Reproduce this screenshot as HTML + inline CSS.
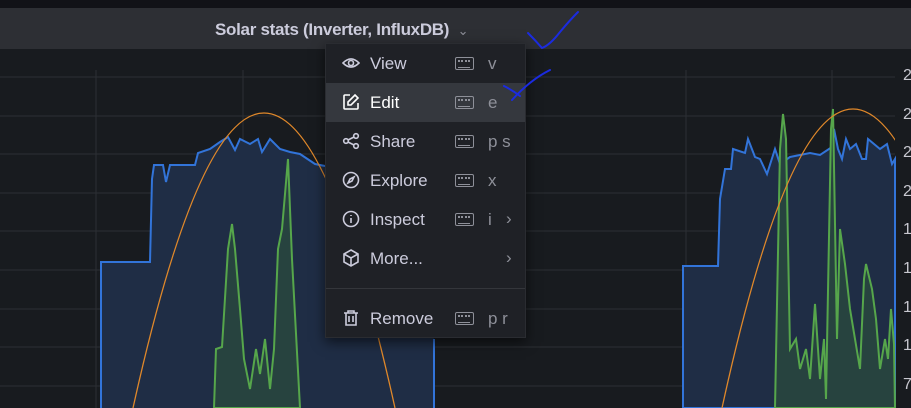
<!DOCTYPE html>
<html><head><style>
*{margin:0;padding:0;box-sizing:border-box}
body{width:911px;height:408px;overflow:hidden;background:#181b1f;font-family:"Liberation Sans",sans-serif;position:relative}
.top{position:absolute;left:0;top:0;width:911px;height:8px;background:#111217}
.hdr{position:absolute;left:0;top:8px;width:911px;height:41px;background:#2d2f34}
.title{position:absolute;left:215px;top:20px;font-size:17px;color:#ccccdc;font-weight:bold;letter-spacing:-0.3px}
.menu{position:absolute;left:325px;top:43px;width:201px;height:295px;background:#1f2126;border:1px solid #2a2c31;box-shadow:0 4px 12px rgba(0,0,0,.6)}
.it{position:absolute;left:0;width:199px;height:39px;color:#ccccdc;font-size:17px}
.it.hl{background:#35383e;color:#fff}
.it .lb{position:absolute;left:44px;top:10px}
.it .ic{position:absolute;left:16px;top:10px;width:18px;height:18px}
.it .kb{position:absolute;left:129px;top:13px;width:19px;height:13px;border:1.5px solid #8e9099;border-radius:2px}
.it .kb:after{content:"";position:absolute;left:2px;top:2px;width:12px;height:5px;border-top:2px dotted #8e9099;border-bottom:1.5px solid #8e9099}
.it .k{position:absolute;left:162px;top:10px;color:#8e9099}
.it .ch{position:absolute;left:180px;top:9px;color:#8e9099}
.div{position:absolute;left:0;top:244px;width:199px;height:1px;background:#34363b}
.ax{position:absolute;left:903px;color:#c8c8d0;font-size:16px}
</style></head><body>
<div class="top"></div>
<div class="hdr"></div>
<svg style="position:absolute;left:0;top:49px" width="911" height="359">
<defs><clipPath id="c"><rect x="0" y="0" width="895" height="359"/></clipPath></defs>
<g stroke="#2c2f34" stroke-width="1">
<line x1="0" y1="28" x2="895" y2="28"/><line x1="0" y1="67" x2="895" y2="67"/><line x1="0" y1="105" x2="895" y2="105"/><line x1="0" y1="144" x2="895" y2="144"/><line x1="0" y1="182" x2="895" y2="182"/><line x1="0" y1="221" x2="895" y2="221"/><line x1="0" y1="260" x2="895" y2="260"/><line x1="0" y1="298" x2="895" y2="298"/><line x1="0" y1="337" x2="895" y2="337"/>
<line x1="96" y1="21" x2="96" y2="359"/><line x1="243" y1="21" x2="243" y2="359"/><line x1="686" y1="21" x2="686" y2="359"/><line x1="832" y1="21" x2="832" y2="359"/>
</g>
<path d="M101 359 L101 213 L150 213 L152 130 L154 116 L163 116 L166 133 L170 116 L195 116 L198 104 L210 100 L220 93 L228 88 L235 101 L240 90 L250 95 L258 90 L262 103 L270 90 L280 100 L290 103 L300 105 L315 115 L330 118 L434 118 L434 359 Z" fill="#1f2d45"/>
<path d="M101 359 L101 213 L150 213 L152 130 L154 116 L163 116 L166 133 L170 116 L195 116 L198 104 L210 100 L220 93 L228 88 L235 101 L240 90 L250 95 L258 90 L262 103 L270 90 L280 100 L290 103 L300 105 L315 115 L330 118" fill="none" stroke="#3274d9" stroke-width="2"/>
<line x1="434" y1="290" x2="434" y2="359" stroke="#3274d9" stroke-width="2"/>
<path d="M214 359 L216 300 L222 298 L228 200 L232 175 L235 200 L240 260 L244 310 L250 340 L256 300 L260 325 L265 290 L270 340 L274 300 L278 200 L282 180 L288 110 L292 210 L300 359 Z" fill="#27433f" stroke="#56a64b" stroke-width="2"/>
<path d="M133 359 Q264 -231 395 359" fill="none" stroke="#e0882a" stroke-width="1.3"/>
<path d="M683 359 L683 217 L718 217 L720 150 L725 120 L731 120 L733 100 L745 104 L748 90 L755 108 L760 110 L767 125 L775 100 L780 115 L790 108 L810 104 L820 106 L832 98 L834 80 L838 100 L842 110 L846 90 L850 100 L856 95 L862 110 L866 110 L868 90 L880 100 L887 95 L892 115 L895 110 L895 359 Z" fill="#1f2d45" stroke="#3274d9" stroke-width="2"/>
<path d="M775 359 L780 100 L783 65 L786 90 L790 300 L796 290 L800 320 L806 300 L810 330 L815 255 L820 330 L824 290 L826 350 L831 80 L833 60 L837 290 L840 180 L845 215 L850 260 L855 290 L860 320 L864 230 L866 215 L872 240 L876 270 L880 320 L885 290 L888 310 L891 260 L894 295 L895 359 Z" fill="#27433f" stroke="#56a64b" stroke-width="2"/>
<path clip-path="url(#c)" d="M722 359 Q853 -239 984 359" fill="none" stroke="#e0882a" stroke-width="1.3"/>
</svg>
<div class="ax" style="top:67px">2</div><div class="ax" style="top:106px">2</div><div class="ax" style="top:144px">2</div><div class="ax" style="top:183px">2</div><div class="ax" style="top:221px">1</div><div class="ax" style="top:260px">1</div><div class="ax" style="top:299px">1</div><div class="ax" style="top:337px">1</div><div class="ax" style="top:376px">7</div>
<div class="title">Solar stats (Inverter, InfluxDB) <span style="font-weight:normal;color:#8e9099;font-size:13px;margin-left:4px">&#8964;</span></div>
<div class="menu">
<div class="it" style="top:0"><svg class="ic" viewBox="0 0 18 18" fill="none" stroke="#ccccdc" stroke-width="1.6"><path d="M1 9 Q9 1 17 9 Q9 17 1 9Z"/><circle cx="9" cy="9" r="2.5"/></svg><span class="lb">View</span><span class="kb"></span><span class="k">v</span></div>
<div class="it hl" style="top:39px"><svg class="ic" viewBox="0 0 18 18" fill="none" stroke="#fff" stroke-width="1.6"><path d="M8 2H3Q2 2 2 3V15Q2 16 3 16H15Q16 16 16 15V10"/><path d="M13 2L16 5L9 12H6V9Z"/></svg><span class="lb">Edit</span><span class="kb"></span><span class="k">e</span></div>
<div class="it" style="top:78px"><svg class="ic" viewBox="0 0 18 18" fill="none" stroke="#ccccdc" stroke-width="1.6"><circle cx="4" cy="9" r="2.3"/><circle cx="14" cy="4" r="2.3"/><circle cx="14" cy="14" r="2.3"/><path d="M6 8L12 5M6 10L12 13"/></svg><span class="lb">Share</span><span class="kb"></span><span class="k">p s</span></div>
<div class="it" style="top:117px"><svg class="ic" viewBox="0 0 18 18" fill="none" stroke="#ccccdc" stroke-width="1.6"><circle cx="9" cy="9" r="7.5"/><path d="M12 6L10 10L6 12L8 8Z"/></svg><span class="lb">Explore</span><span class="kb"></span><span class="k">x</span></div>
<div class="it" style="top:156px"><svg class="ic" viewBox="0 0 18 18" fill="none" stroke="#ccccdc" stroke-width="1.6"><circle cx="9" cy="9" r="7.5"/><path d="M9 8V13M9 5V6"/></svg><span class="lb">Inspect</span><span class="kb"></span><span class="k">i</span><span class="ch">&#8250;</span></div>
<div class="it" style="top:195px"><svg class="ic" viewBox="0 0 18 18" fill="none" stroke="#ccccdc" stroke-width="1.6"><path d="M9 1L16 5V13L9 17L2 13V5Z"/><path d="M2 5L9 9L16 5M9 9V17"/></svg><span class="lb">More...</span><span class="ch">&#8250;</span></div>
<div class="div"></div>
<div class="it" style="top:255px"><svg class="ic" viewBox="0 0 18 18" fill="none" stroke="#ccccdc" stroke-width="1.6"><path d="M2 4H16M6 4V2H12V4M4 4V16H14V4M7 7V13M11 7V13"/></svg><span class="lb">Remove</span><span class="kb"></span><span class="k">p r</span></div>
</div>
<svg style="position:absolute;left:0;top:0" width="911" height="408" fill="none" stroke="#1b2be0" stroke-width="2" stroke-linecap="round">
<path d="M528 33 Q535 40 542 48 Q550 45 560 32 Q570 20 578 12"/>
<path d="M504 86 Q512 90 520 96 M512 100 Q530 80 550 70"/>
</svg>
</body></html>
